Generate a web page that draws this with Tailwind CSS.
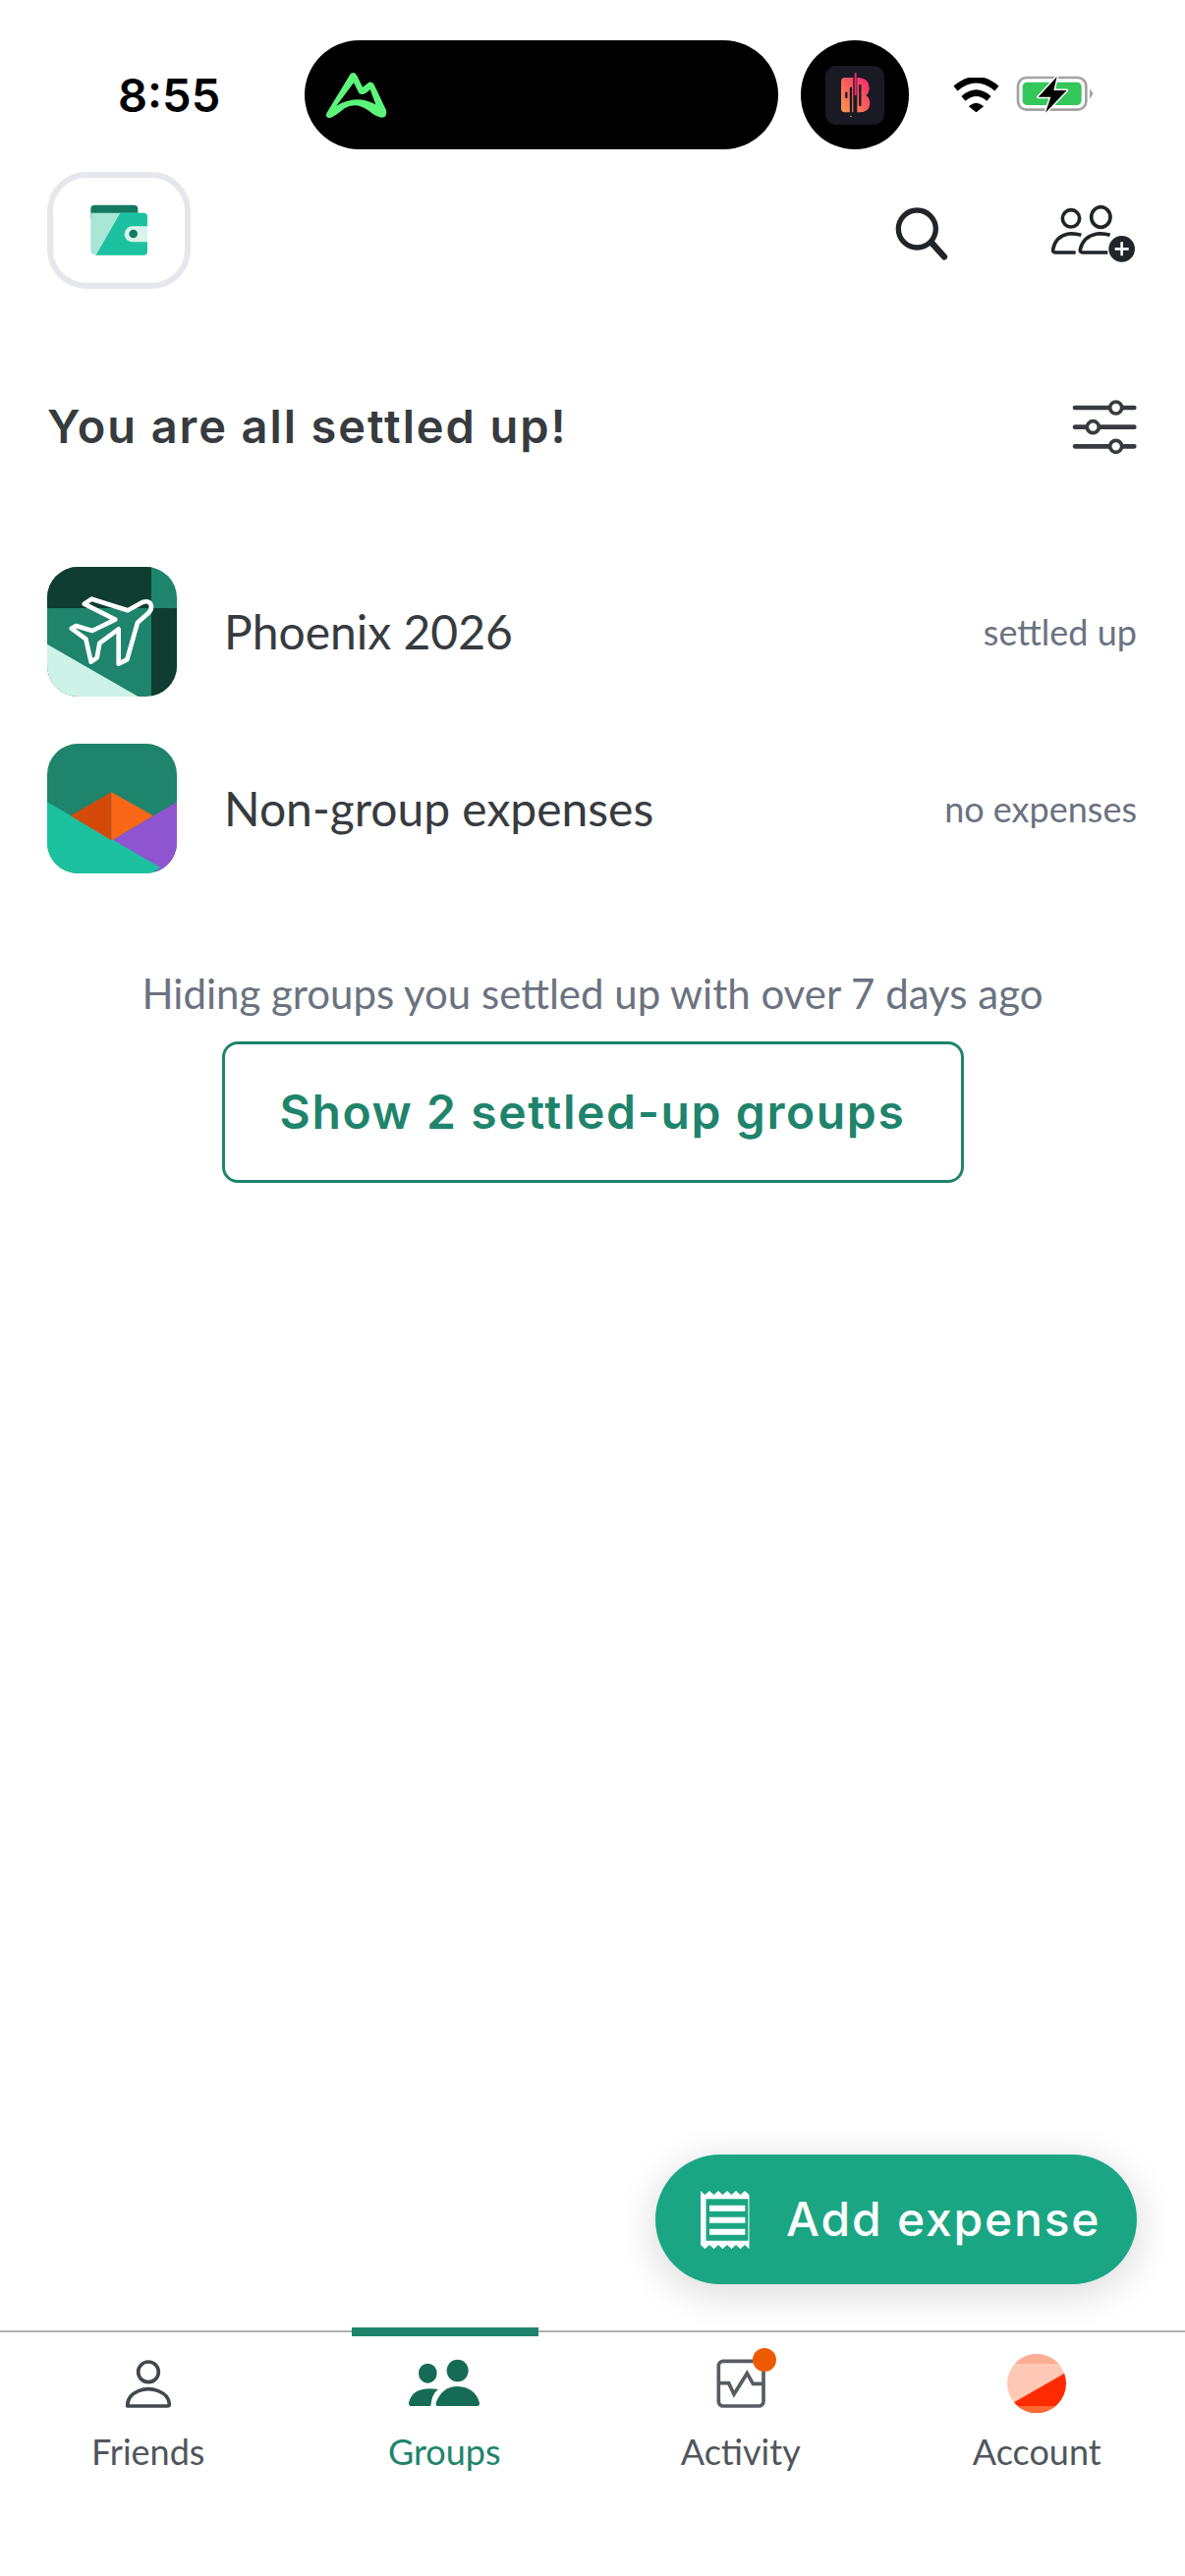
<!DOCTYPE html>
<html lang="en">
<head>
<meta charset="utf-8">
<title>Groups</title>
<script src="https://cdn.jsdelivr.net/npm/@tailwindcss/browser@4"></script>
</head>
<body class="bg-white">
<div class="relative flex flex-col w-[1206px] h-[2622px] overflow-hidden bg-white font-['Lato',sans-serif]">

  <!-- status bar -->
  <div class="flex items-center h-[111px] mt-[41px] pl-[120px] shrink-0">
    <span class="w-[190px] font-['Inter',sans-serif] font-semibold text-[47px] leading-none text-black">8:55</span>
    <div class="flex items-center w-[482px] h-[111px] rounded-[56px] bg-black pl-[19px]">
      <svg class="w-[70px] h-[70px]" viewBox="85 150 210 160"><path fill="#5df47c" fill-rule="evenodd" d="M95 285 L168 165 Q180 155 188 170 L205 205 L225 190 Q235 187 240 197 L277 275 Q282 298 262 298 Q245 295 225 278 Q185 248 150 270 Q120 295 105 300 Q90 298 95 285 Z M125 262 Q185 225 245 258 L228 212 Q210 232 195 225 L178 192 Z"/></svg>
    </div>
    <div class="flex items-center justify-center w-[110px] h-[111px] ml-[23px] rounded-full bg-black">
      <svg class="w-[60px] h-[60px]" viewBox="120 112 180 180">
        <defs><linearGradient id="bg" x1="1" y1="0" x2="0" y2="1"><stop offset="0" stop-color="#f5256f"/><stop offset="1" stop-color="#fb9a4a"/></linearGradient></defs>
        <rect x="120" y="112" width="180" height="180" rx="34" fill="#1a1a24"/>
        <path fill="url(#bg)" d="M180 148 H222 Q254 150 254 180 Q254 195 244 202 Q256 210 256 228 Q254 254 222 254 H180 Q168 254 168 242 V160 Q168 148 180 148 Z"/>
        <path d="M211 134 V268" stroke="#1a1a24" stroke-width="12"/>
        <path d="M212 136 V200" stroke="#f5256f" stroke-width="6" stroke-linecap="round"/>
        <path d="M198 208 V265" stroke="#f98a4a" stroke-width="6" stroke-linecap="round"/>
        <path d="M184 195 V208 M198 180 V262 M226 172 V232" stroke="#1a1a24" stroke-width="7" stroke-linecap="round"/>
      </svg>
    </div>
    <svg class="w-[47px] h-[35px] ml-[45px]" viewBox="510 150 140 105" fill="none">
      <path d="M517 183 Q580 130 643 183" stroke="#000" stroke-width="19"/>
      <path d="M541 214 Q580 180 619 214" stroke="#000" stroke-width="19"/>
      <path d="M557 238 Q580 216 603 238 L580 256 Z" fill="#000"/>
    </svg>
    <svg class="w-[80px] h-[40px] ml-[17px]" viewBox="700 145 240 120" fill="none">
      <rect x="706" y="151" width="208" height="98" rx="26" stroke="#a3a3a3" stroke-width="8"/>
      <rect x="720" y="165" width="180" height="70" rx="14" fill="#34c759"/>
      <path d="M925 185 L936 200 L925 216 Z" fill="#a3a3a3"/>
      <path d="M825 148 L768 210 H806 L790 258 L855 190 H815 Z" fill="#000" stroke="#fff" stroke-width="9" stroke-linejoin="round" paint-order="stroke"/>
    </svg>
  </div>

  <!-- top actions -->
  <div class="flex items-center mt-[23px] pl-[48px] pr-[49px] shrink-0">
    <div class="flex items-center justify-center w-[146px] h-[119px] rounded-[40px] border-[6px] border-[#e6e7ed]">
      <svg class="w-[60px] h-[54px]" viewBox="178 148 180 162">
        <rect x="182" y="150" width="144" height="50" rx="12" fill="#137a62"/>
        <path d="M182 174 H343 Q355 174 355 186 V291 Q355 303 343 303 H198 Q182 303 182 287 Z" fill="#a9e6d5"/>
        <path d="M272 174 H343 Q355 174 355 186 V291 Q355 303 343 303 H198 Z" fill="#1cc29f"/>
        <path d="M355 215 H309 A24 24 0 0 0 309 263 H355 Z" fill="#d9f3ec"/>
        <circle cx="312" cy="238" r="13" fill="#137a62"/>
      </svg>
    </div>
    <svg class="w-[54px] h-[56px] ml-auto mt-[8px]" viewBox="96 64 162 168" fill="none" stroke="#212529">
      <circle cx="163" cy="130" r="57" stroke-width="16"/>
      <path d="M207 172 L246 215" stroke-width="19" stroke-linecap="round"/>
    </svg>
    <svg class="w-[88px] h-[60px] ml-[104px] mt-[8px]" viewBox="570 60 264 180" fill="none" stroke="#212529">
      <circle cx="633" cy="100" r="26" stroke-width="11"/>
      <ellipse cx="724" cy="96" rx="29" ry="31" stroke-width="11"/>
      <path d="M664 151 Q645 145 625 147 Q585 155 578 195 Q577 204 587 204 H647" stroke-width="11"/>
      <path d="M752 151 Q735 145 712 147 Q670 155 661 195 Q660 204 670 204 H745" stroke-width="11"/>
      <circle cx="788" cy="193" r="40" fill="#212529" stroke="none"/>
      <path d="M788 172 V214 M767 193 H809" stroke="#fff" stroke-width="8"/>
    </svg>
  </div>

  <!-- balance summary -->
  <div class="flex items-center justify-between mt-[106px] pl-[48px] pr-[49px] h-[66px] shrink-0">
    <h1 class="font-['Inter',sans-serif] font-semibold text-[47px] tracking-[1.9px] leading-none text-[#373b3f]">You are all settled up!</h1>
    <svg class="w-[66px] h-[56px] mt-[2px]" viewBox="634 644 198 168" fill="none">
      <path d="M643 671 H824 M643 730 H824 M643 789 H824" stroke="#373b3f" stroke-width="14" stroke-linecap="round"/>
      <circle cx="768" cy="671" r="18" fill="#fff" stroke="#373b3f" stroke-width="11"/>
      <circle cx="698" cy="730" r="18" fill="#fff" stroke="#373b3f" stroke-width="11"/>
      <circle cx="768" cy="789" r="18" fill="#fff" stroke="#373b3f" stroke-width="11"/>
    </svg>
  </div>

  <!-- groups -->
  <ul class="flex flex-col gap-[49px] mt-[111px] pl-[48px] pr-[49px] shrink-0">
    <li class="flex items-center h-[131px]">
      <svg class="w-[132px] h-[132px]" viewBox="54 52 396 396">
        <defs><clipPath id="c1"><rect x="54" y="52" width="396" height="396" rx="94"/></clipPath></defs>
        <g clip-path="url(#c1)">
          <rect x="54" y="52" width="396" height="396" fill="#1e846b"/>
          <rect x="54" y="52" width="318" height="126" fill="#0f3d31"/>
          <rect x="372" y="178" width="78" height="270" fill="#0f3d31"/>
          <path d="M54 288 L332 448 H54 Z" fill="#cdf2e8"/>
        </g>
        <path d="M372 172 Q368 152 345 160 L300 185 L190 150 L167 165 L262 213 L192 247 L142 232 L128 240 L172 272 L188 342 L206 330 L214 285 L272 242 L272 348 L298 335 L330 222 L362 194 Q372 186 372 172 Z" fill="none" stroke="#fff" stroke-width="14" stroke-linejoin="round"/>
      </svg>
      <span class="ml-[48px] text-[48px] leading-none text-[#373b3f]">Phoenix 2026</span>
      <span class="ml-auto text-[36px] leading-none text-[#6b7280]">settled up</span>
    </li>
    <li class="flex items-center h-[131px]">
      <svg class="w-[132px] h-[132px]" viewBox="54 592 396 396">
        <defs><clipPath id="c2"><rect x="54" y="592" width="396" height="396" rx="94"/></clipPath></defs>
        <g clip-path="url(#c2)">
          <rect x="54" y="592" width="396" height="396" fill="#1e846b"/>
          <path d="M252 887 L450 770 V988 H400 Z" fill="#8f55d0"/>
          <path d="M54 770 L400 970 L370 988 H54 Z" fill="#1cc29f"/>
          <path d="M125 812 L250 740 V887 Z" fill="#d34a0b"/>
          <path d="M250 740 L378 812 L252 887 L250 887 Z" fill="#fa6717"/>
        </g>
      </svg>
      <span class="ml-[48px] text-[48px] leading-none text-[#373b3f]">Non-group expenses</span>
      <span class="ml-auto text-[36px] leading-none text-[#6b7280]">no expenses</span>
    </li>
  </ul>

  <!-- hidden groups -->
  <div class="flex flex-col items-center shrink-0">
    <p class="mt-[99px] text-[42px] leading-[48px] text-[#6b7280]">Hiding groups you settled up with over 7 days ago</p>
    <button class="flex items-center justify-center w-[755px] h-[144px] mt-[25px] rounded-[16px] border-[3px] border-[#1e846b] font-['Inter',sans-serif] font-semibold text-[48px] tracking-[1.6px] leading-none text-[#1e846b]">Show 2 settled-up groups</button>
  </div>

  <!-- floating action -->
  <button class="absolute left-[667px] top-[2193px] flex items-center w-[490px] h-[132px] pl-[46px] rounded-[66px] bg-[#1aa683] shadow-[0_8px_40px_rgba(0,0,0,0.16)] font-['Inter',sans-serif] font-medium text-[48px] tracking-[1.8px] leading-none text-white">
    <svg class="w-[54px] h-[59px] shrink-0" viewBox="212 178 156 177" preserveAspectRatio="none">
      <path fill="#fff" fill-rule="evenodd" d="M212 178 l13 12 13-12 13 12 13-12 13 12 13-12 13 12 13-12 13 12 13-12 13 12 V355 l-13-12 -13 12 -13-12 -13 12 -13-12 -13 12 -13-12 -13 12 -13-12 -13 12 -13-12 Z M228 203 V330 H352 V203 Z"/>
      <path fill="#fff" d="M238 222 H343 V240 H238 Z M238 258 H343 V276 H238 Z M238 294 H343 V312 H238 Z"/>
    </svg>
    <span class="ml-[33px]">Add expense</span>
  </button>

  <!-- tab bar -->
  <nav class="relative grid grid-cols-4 mt-auto h-[250px] border-t-2 border-[#b0b0b0] text-[36px] leading-none text-[#50565c] shrink-0">
    <div class="absolute left-[358px] -top-[5px] w-[190px] h-[9px] bg-[#1e846b]"></div>
    <a class="flex flex-col items-center pt-[16px]">
      <svg class="w-[90px] h-[72px]" viewBox="-15 15 270 216" fill="none" stroke="#43484d">
        <circle cx="120" cy="88" r="31" stroke-width="11"/>
        <path d="M56 192 Q56 160 90 146 Q120 134 150 146 Q184 160 184 186 Q184 192 178 192 Z" stroke-width="11" stroke-linejoin="round"/>
      </svg>
      <span class="mt-[15px]">Friends</span>
    </a>
    <a class="flex flex-col items-center pt-[16px] text-[#1e846b]">
      <svg class="w-[90px] h-[72px]" viewBox="891 15 270 216" fill="#166b55">
        <ellipse cx="976" cy="92" rx="28" ry="30"/>
        <ellipse cx="1067" cy="84" rx="33" ry="34"/>
        <path d="M1008 141 Q988 155 985 192 H926 Q918 192 918 182 Q930 130 1008 141 Z"/>
        <path d="M1008 192 Q1000 192 1001 182 Q1020 132 1067 132 Q1120 134 1134 182 Q1134 192 1126 192 Z"/>
      </svg>
      <span class="mt-[15px]">Groups</span>
    </a>
    <a class="flex flex-col items-center pt-[16px]">
      <svg class="w-[90px] h-[72px]" viewBox="54 15 270 216" fill="none" stroke="#565c62">
        <rect x="121" y="55" width="137" height="137" rx="14" stroke-width="11"/>
        <path d="M121 122 H152 L168 156 L208 92 L226 124 H258" stroke-width="11"/>
        <circle cx="261" cy="51" r="36" fill="#ee5a00" stroke="none"/>
      </svg>
      <span class="mt-[15px]">Activity</span>
    </a>
    <a class="flex flex-col items-center pt-[16px]">
      <svg class="w-[90px] h-[72px]" viewBox="960 15 270 216">
        <defs><clipPath id="av"><circle cx="1095" cy="123" r="90"/></clipPath></defs>
        <g clip-path="url(#av)">
          <rect x="1000" y="30" width="190" height="190" fill="#ffc9b5"/>
          <rect x="1000" y="30" width="190" height="33" fill="#ffae96"/>
          <path d="M1180 92 L1027 180 V220 H1190 V92 Z" fill="#ff2b00"/>
          <path d="M1000 192 H1190 V220 H1000 Z" fill="#ff6a33"/>
        </g>
      </svg>
      <span class="mt-[15px]">Account</span>
    </a>
  </nav>
</div>
</body>
</html>
